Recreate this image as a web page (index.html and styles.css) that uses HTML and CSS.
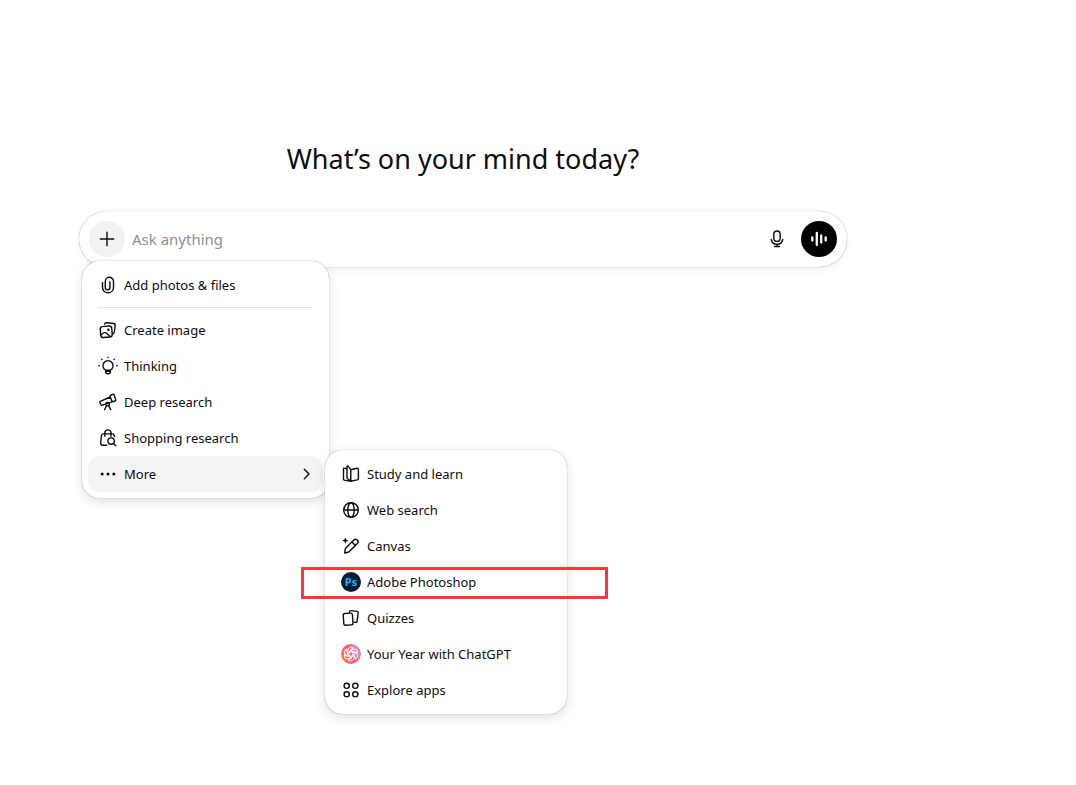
FILE: index.html
```html
<!DOCTYPE html>
<html lang="en">
<head>
<meta charset="utf-8">
<meta name="viewport" content="width=device-width, initial-scale=1">
<title>What’s on your mind today?</title>
<link rel="stylesheet" href="styles.css">
</head>

<body>
<main class="page">
	<h1 class="title">What’s on your mind today?</h1>

	<form class="composer">
		<button type="button" class="round plus" aria-label="Add files and more">
			<svg class="icon" viewBox="0 0 20 20"><path d="M10 3.3v13.4M3.3 10h13.4"/></svg>
		</button>
		<input class="prompt" type="text" placeholder="Ask anything" aria-label="Ask anything" autocomplete="off">
		<button type="button" class="round mic" aria-label="Dictate">
			<svg class="icon" viewBox="0 0 20 20"><rect x="6.8" y="2" width="6.4" height="10.400" rx="3.200"/><path d="M4.200 10.500a5.900 5.900 0 0 0 11.600 0M10 15.300v2.200M7.500 17.500h5"/></svg>
		</button>
		<button type="button" class="round voice" aria-label="Use voice mode">
			<svg class="icon" viewBox="0 0 20 20"><path d="M3.300 8.500v3M7.800 4v12M12.200 6.500v7M16.700 8.500v3"/></svg>
		</button>

		<ul class="menu tools">
			<li>
				<button type="button" class="item">
					<svg class="icon" viewBox="0 0 20 20"><path d="M4.500 7.600v5a5.200 5.200 0 0 0 5.300 5.200c3.400 0 5.700-2.400 5.700-5.400V6.300a4.100 4.100 0 0 0-8.200 0v6.200a2.300 2.300 0 0 0 4.600 0V6.600"/></svg>
					Add photos &amp; files
				</button>
			</li>
			<li class="line"></li>
			<li>
				<button type="button" class="item">
					<svg class="icon" viewBox="0 0 20 20"><path d="M6.600 4.100c.3-1 1-1.500 2-1.400l6.900.8c1.200.2 1.900 1 1.700 2.200l-.9 6.300c-.1 1-.7 1.600-1.600 1.700"/><rect x="2.500" y="6.300" width="11.500" height="11" rx="2.400" transform="rotate(-5 8 12)"/><path d="M3 15.200c2.200-3 4.300-3.300 6.200-1.500 1.400 1.300 2.400 2.400 3.400 3"/><circle class="dot" cx="10.400" cy="9.700" r="1.300"/></svg>
					Create image
				</button>
			</li>
			<li>
				<button type="button" class="item">
					<svg class="icon" viewBox="0 0 20 20"><path d="M7.600 14.200a5.100 5.100 0 1 1 4.800 0zM7.600 14.200v1.800c0 1.100.8 1.700 2.400 1.700s2.400-.6 2.400-1.700v-1.800M7.800 15.400h4.400"/><path d="M10 1.100v.4M3.700 3.200l.3.300M16.300 3.200l-.3.300M.9 9.700h.4M18.700 9.700h.4"/></svg>
					Thinking
				</button>
			</li>
			<li>
				<button type="button" class="item">
					<svg class="icon" viewBox="0 0 20 20"><path d="M2.300 9.300l10-4.300 1.900 4.800-9.900 3.400c-.7.200-1.200 0-1.500-.7l-.9-1.900c-.2-.6-.1-1 .4-1.300zM12.300 5c-.4-1.100 0-1.700.8-2l1.500-.6c.8-.3 1.400 0 1.700.8l1.400 4.200c.3.800 0 1.400-.8 1.600l-1.400.5c-.7.200-1.100 0-1.300-.5"/><circle cx="9.600" cy="12.200" r="1.700"/><path d="M8.500 13.600l-2 4.100M10.700 13.600l2 4.100"/></svg>
					Deep research
				</button>
			</li>
			<li>
				<button type="button" class="item">
					<svg class="icon" viewBox="0 0 20 20"><path d="M8.800 17.300H4.900c-1.500 0-2.300-.9-2.200-2.300l.7-7.200c.1-1.300.9-1.900 2.100-1.900h8.700c1.200 0 1.900.7 2.100 1.900l.1.900M6.800 8.200V5a3.100 3.100 0 0 1 6.200 0v3.200"/><circle cx="13.100" cy="13.100" r="3.200"/><path d="M15.500 15.500l2.300 2.300"/></svg>
					Shopping research
				</button>
			</li>
			<li class="parent">
				<button type="button" class="item active" aria-expanded="true">
					<svg class="icon" viewBox="0 0 20 20"><g class="dot"><circle cx="4.200" cy="10" r="1.500"/><circle cx="10" cy="10" r="1.500"/><circle cx="15.800" cy="10" r="1.500"/></g></svg>
					More
					<svg class="icon arrow" viewBox="0 0 20 20"><path d="M7.300 5.200l4.700 4.800-4.700 4.800"/></svg>
				</button>

				<ul class="menu more">
					<li>
						<button type="button" class="item">
							<svg class="icon" viewBox="0 0 20 20"><path d="M6 5.200l-2.200-1c-.8-.3-1.300 0-1.300.8v9.900c0 .6.300 1 .8 1.200L9.800 17.300V5.600L7.300 2.300C6.600 1.500 6 1.800 6 2.700v10.500c0 .5.100.9.500 1.300l3.300 2.800M9.800 17.300l6.400-1.400c.8-.2 1.200-.6 1.200-1.300V5.400c0-.9-.5-1.300-1.400-1.100L9.800 5.700"/></svg>
							Study and learn
						</button>
					</li>
					<li>
						<button type="button" class="item">
							<svg class="icon" viewBox="0 0 20 20"><circle cx="10" cy="10" r="7.300"/><ellipse cx="10" cy="10" rx="3.200" ry="7.300"/><path d="M2.700 10h14.600"/></svg>
							Web search
						</button>
					</li>
					<li>
						<button type="button" class="item">
							<svg class="icon" viewBox="0 0 20 20"><path d="M3.700 17l.5-3.600c.1-.6.3-1 .7-1.400l7.900-7.900a2.450 2.450 0 0 1 3.500 3.500l-7.900 7.900c-.4.400-.8.600-1.400.7zM11 6l3.400 3.400"/><path class="dot" d="M4.300 1.500l.9 2.100 2.200 1-2.200.9-.9 2.200-.9-2.200-2.200-.9 2.200-1z"/></svg>
							Canvas
						</button>
					</li>
					<li class="marked">
						<button type="button" class="item">
							<svg class="icon brand" viewBox="0 0 20 20"><circle cx="10" cy="10" r="10" fill="#001e36"/><text x="10" y="14" class="ps">Ps</text></svg>
							Adobe Photoshop
						</button>
					</li>
					<li>
						<button type="button" class="item">
							<svg class="icon" viewBox="0 0 20 20"><rect x="2.500" y="5.300" width="9.200" height="11.800" rx="1.800" transform="rotate(-4 7 11)"/><path d="M8.300 4.300l.1-.6c.1-.8.600-1.200 1.400-1.100l6.200.8c.9.100 1.300.7 1.200 1.500l-1.100 8.400c-.1.900-.7 1.200-1.500 1.100l-1.400-.2"/></svg>
							Quizzes
						</button>
					</li>
					<li>
						<button type="button" class="item">
							<svg class="icon brand" viewBox="0 0 20 20">
								<defs>
									<linearGradient id="year" x1="0" y1=".7" x2="1" y2=".3">
										<stop offset="0" stop-color="#ff7a3c"/>
										<stop offset=".5" stop-color="#ff5570"/>
										<stop offset=".8" stop-color="#e47cba"/>
										<stop offset="1" stop-color="#789cff"/>
									</linearGradient>
									<path id="petal" d="M10 7.700L13.100 9.500V13.200C13.100 15.500 11.700 17 9.900 17 8.900 17 8.100 16.700 7.400 16.100L10.600 14.200"/>
								</defs>
								<circle cx="10" cy="10" r="10" fill="url(#year)"/>
								<g class="knot">
									<use href="#petal"/>
									<use href="#petal" transform="rotate(60 10 10)"/>
									<use href="#petal" transform="rotate(120 10 10)"/>
									<use href="#petal" transform="rotate(180 10 10)"/>
									<use href="#petal" transform="rotate(240 10 10)"/>
									<use href="#petal" transform="rotate(300 10 10)"/>
								</g>
							</svg>
							Your Year with ChatGPT
						</button>
					</li>
					<li>
						<button type="button" class="item">
							<svg class="icon" viewBox="0 0 20 20"><circle cx="5.700" cy="5.800" r="2.600"/><circle cx="14.300" cy="5.800" r="2.600"/><circle cx="5.700" cy="14.300" r="2.600"/><circle cx="14.300" cy="14.300" r="2.600"/></svg>
							Explore apps
						</button>
					</li>
				</ul>
			</li>
		</ul>
	</form>
</main>
</body>
</html>
```
FILE: styles.css
```css
*{ margin:0; padding:0; box-sizing:border-box;}
body{ background:#fff; color:#0d0d0d; font:14px/20px "Segoe UI","Noto Sans","Open Sans",sans-serif;}
li{ list-style:none;}
button, input{ border:0; background:none; color:inherit; font:inherit;}
button{ cursor:pointer;}

.page{ min-height:100vh; padding:142px 150px 0 0;}
.title{ font-size:27px; line-height:34px; font-weight:400; text-align:center;}

.composer{ position:relative; display:flex; align-items:center; max-width:768px; margin:35px auto 0; padding:10px; border-radius:28px; background:#fff; box-shadow:0 0 1px rgba(0,0,0,.5), 0 4px 6px rgba(0,0,0,.05);}
.round{ display:flex; flex:none; align-items:center; justify-content:center; width:36px; height:36px; border-radius:50%;}
.plus{ background:#f2f2f2;}
.mic{ margin-right:6px;}
.voice{ background:#000; color:#fff;}
.prompt{ flex:1; min-width:0; margin-left:7px; font-size:15px; line-height:24px; outline:none;}
.prompt::placeholder{ color:#8f8f8f; opacity:1;}

.icon{ flex:none; width:20px; height:20px; fill:none; stroke:currentColor; stroke-width:1.4; stroke-linecap:round; stroke-linejoin:round;}
.icon .dot{ fill:currentColor; stroke:none;}
.voice .icon{ width:20px; height:20px; stroke-width:2.3;}
.icon.brand{ stroke:none;}
.ps{ fill:#31a8ff; font:bold 11px "Open Sans",sans-serif; text-anchor:middle;}
.knot{ stroke:#fff; stroke-width:1;}

.menu{ position:absolute; padding:6px; border-radius:18px; background:#fff; box-shadow:0 0 1px rgba(0,0,0,.5), 0 4px 12px rgba(0,0,0,.12);}
.tools{ top:50px; left:3px; width:247px;}
.more{ top:-6px; left:237px; width:242px;}
.parent, .marked{ position:relative;}
.item{ display:flex; align-items:center; gap:6px; width:100%; height:36px; padding:0 10px; border-radius:12px; text-align:left; white-space:nowrap; font-size:13px;}
.item:hover, .active{ background:#f4f4f4;}
.arrow{ margin-left:auto; margin-right:-4px;}
.line{ height:1px; margin:4px 10px; background:#e3e3e3;}

/* red frame round the Photoshop row */
.marked:after{ content:""; position:absolute; top:3px; bottom:1px; left:-30px; right:-47px; border:3px solid #fb3636; pointer-events:none;}
```
